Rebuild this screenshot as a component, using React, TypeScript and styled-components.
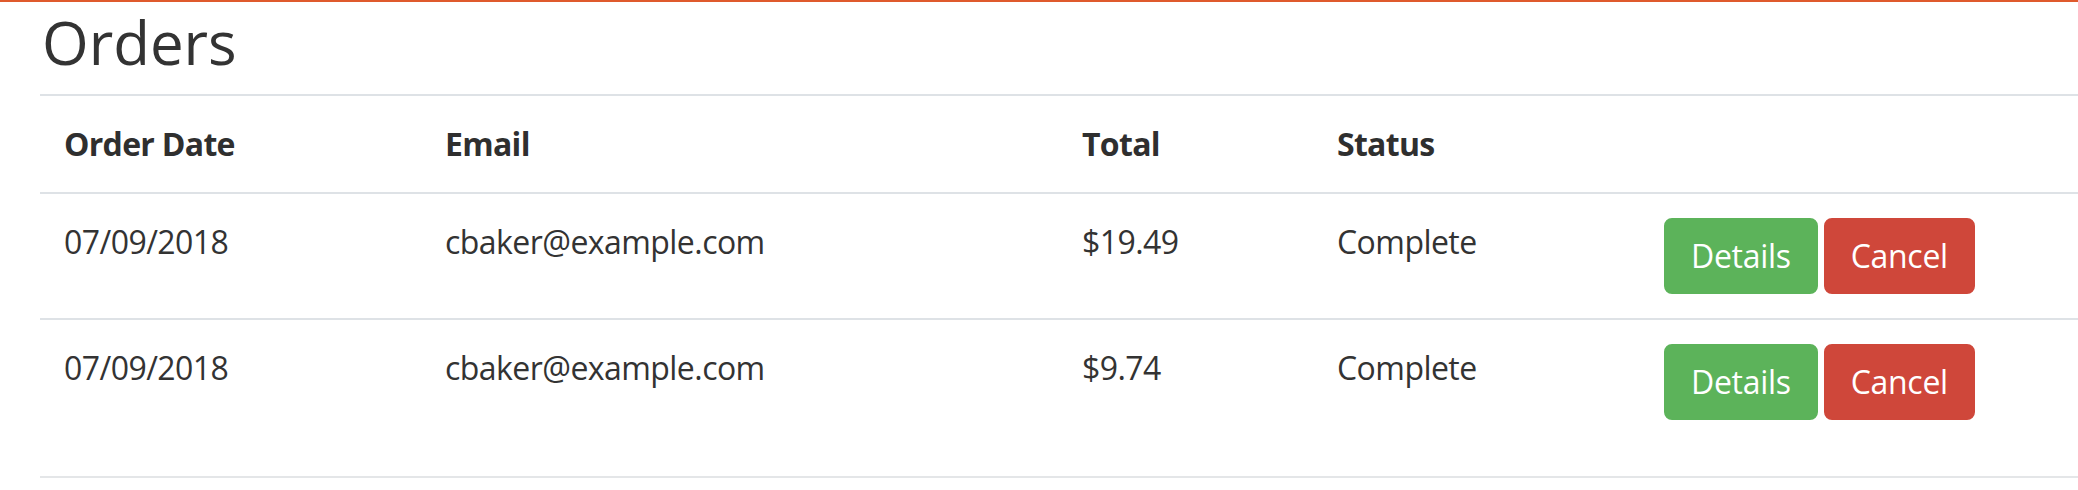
import React from "react";
import styled, { createGlobalStyle } from "styled-components";

const GlobalStyle = createGlobalStyle`
  html, body {
    margin: 0;
    padding: 0;
    background: #ffffff;
  }
  body {
    font-family: "Open Sans", "Noto Sans", "Liberation Sans", sans-serif;
    color: #333333;
    overflow: hidden;
  }
`;

const Page = styled.div`
  border-top: 2px solid #df5a2d;
  padding-left: 40px;
  min-height: 488px;
`;

const Title = styled.h1`
  margin: 0;
  padding: 4px 0 0 2px;
  font-size: 60px;
  line-height: 72px;
  font-weight: 400;
  color: #333333;
  margin-bottom: 16px;
`;

const Table = styled.div`
  border-bottom: 2px solid #e4e6e8;
  padding-bottom: 32px;
`;

const Row = styled.div`
  display: grid;
  grid-template-columns: 381px 637px 255px 327px 1fr;
  border-top: 2px solid #dee2e6;
`;

const Cell = styled.div<{ $head?: boolean }>`
  padding: 24px;
  font-size: 32px;
  line-height: 48px;
  letter-spacing: ${(p) => (p.$head ? "-0.7px" : "-0.55px")};
  font-weight: ${(p) => (p.$head ? 700 : 400)};
  color: ${(p) => (p.$head ? "#2f2f2f" : "#333333")};
  white-space: nowrap;
`;

const Actions = styled.div`
  padding: 24px;
  display: flex;
  gap: 6px;
  align-items: flex-start;
`;

const Button = styled.button<{ $variant: "success" | "danger" }>`
  font-family: inherit;
  font-size: 32px;
  line-height: 48px;
  font-weight: 400;
  letter-spacing: -0.3px;
  padding: 12px 25px;
  border-radius: 8px;
  color: #ffffff;
  cursor: pointer;
  background: ${(p) => (p.$variant === "success" ? "#5cb35a" : "#cf473a")};
  border: 2px solid ${(p) => (p.$variant === "success" ? "#5cb35a" : "#cf473a")};
`;

type Order = { date: string; email: string; total: string; status: string };

const orders: Order[] = [
  { date: "07/09/2018", email: "cbaker@example.com", total: "$19.49", status: "Complete" },
  { date: "07/09/2018", email: "cbaker@example.com", total: "$9.74", status: "Complete" },
];

export default function App() {
  return (
    <>
      <GlobalStyle />
      <Page>
        <Title>Orders</Title>
        <Table>
          <Row>
            <Cell $head>Order Date</Cell>
            <Cell $head>Email</Cell>
            <Cell $head>Total</Cell>
            <Cell $head>Status</Cell>
            <Cell $head />
          </Row>
          {orders.map((o, i) => (
            <Row key={i}>
              <Cell>{o.date}</Cell>
              <Cell>{o.email}</Cell>
              <Cell>{o.total}</Cell>
              <Cell>{o.status}</Cell>
              <Actions>
                <Button $variant="success">Details</Button>
                <Button $variant="danger">Cancel</Button>
              </Actions>
            </Row>
          ))}
        </Table>
      </Page>
    </>
  );
}
